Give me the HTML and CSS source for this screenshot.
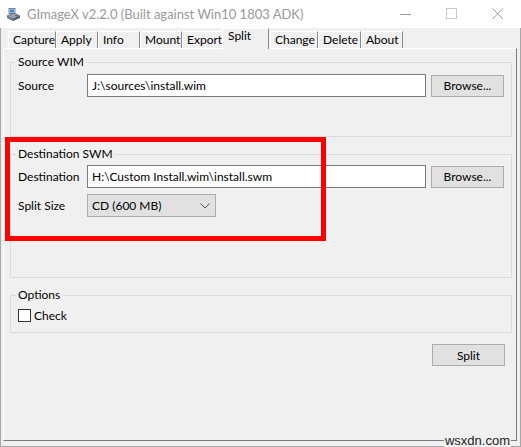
FILE: index.html
```html
<!DOCTYPE html>
<html>
<head>
<meta charset="utf-8">
<link rel="stylesheet" href="styles.css">
</head>
<body>
<div class="window">
  <div class="titlebar">
    <svg class="appicon" width="16" height="16" viewBox="0 0 16 16">
      <path d="M2 9 L9 6 L15 9 L8 12 Z" fill="#9aa4ae" stroke="#5a6470" stroke-width="0.8"/>
      <path d="M2 9 L2 11 L8 14 L8 12 Z" fill="#6b7580"/>
      <path d="M8 12 L8 14 L15 11 L15 9 Z" fill="#4f5964"/>
      <rect x="4" y="1.5" width="6" height="5" fill="#d8e4ee" stroke="#5a6a7a" stroke-width="0.8"/>
      <rect x="5" y="2.5" width="4" height="3" fill="#3a86c8"/>
      <path d="M10 8.5 L13 9.2" stroke="#2f6fb0" stroke-width="1.2"/>
    </svg>
    <div class="title">GImageX v2.2.0 (Built against Win10 1803 ADK)</div>
    <div class="controls">
      <div class="ctl"><svg width="12" height="12" viewBox="0 0 12 12"><path d="M0 6.5 H11" stroke="#9a9a9a" stroke-width="1"/></svg></div>
      <div class="ctl"><svg width="12" height="12" viewBox="0 0 12 12"><rect x="0.5" y="0.5" width="10" height="10" fill="none" stroke="#c8c8c8" stroke-width="1"/></svg></div>
      <div class="ctl"><svg width="12" height="12" viewBox="0 0 12 12"><path d="M0.5 0.5 L11 11 M11 0.5 L0.5 11" stroke="#9a9a9a" stroke-width="1"/></svg></div>
    </div>
  </div>
  <div class="tabs">
    <div class="tab w48">Capture</div>
    <div class="tab w42">Apply</div>
    <div class="tab w42">Info</div>
    <div class="tab w42">Mount</div>
    <div class="tab w41">Export</div>
    <div class="tab active w46">Split</div>
    <div class="tab w48">Change</div>
    <div class="tab w43">Delete</div>
    <div class="tab w42">About</div>
  </div>
  <div class="panel">
    <div class="group g-source">
      <div class="group-title">Source WIM</div>
      <div class="row">
        <div class="label">Source</div>
        <div class="input">J:\sources\install.wim</div>
        <div class="button">Browse...</div>
      </div>
    </div>
    <div class="group g-dest">
      <div class="group-title">Destination SWM</div>
      <div class="row">
        <div class="label">Destination</div>
        <div class="input">H:\Custom Install.wim\install.swm</div>
        <div class="button">Browse...</div>
      </div>
      <div class="row row2">
        <div class="label">Split Size</div>
        <div class="select">
          <span>CD (600 MB)</span>
          <svg width="10" height="6" viewBox="0 0 10 6"><path d="M0.5 0.5 L5 5 L9.5 0.5" fill="none" stroke="#555" stroke-width="1"/></svg>
        </div>
      </div>
    </div>
    <div class="group g-opts">
      <div class="group-title">Options</div>
      <div class="check-row">
        <div class="checkbox"></div>
        <span>Check</span>
      </div>
    </div>
    <div class="actions">
      <div class="button">Split</div>
    </div>
  </div>
  <div class="highlight"></div>
  <div class="watermark">wsxdn.com</div>
</div>
</body>
</html>
```
FILE: styles.css
```css
* { box-sizing: border-box; }
html, body { margin: 0; padding: 0; }
body {
  width: 521px;
  height: 447px;
  overflow: hidden;
  background: #f0f0f0;
  font-family: "Lato", "Noto Sans", sans-serif;
  font-size: 12px;
  color: #000;
}
.window {
  position: relative;
  width: 521px;
  height: 447px;
  background: #f0f0f0;
  border: 1px solid #a8a8a8;
  border-top: none;
}
.titlebar {
  height: 28px;
  background: #fff;
  display: flex;
  align-items: center;
  margin: 0 -1px;
}
.appicon { margin-left: 5px; margin-top: 2px; }
.title {
  margin-left: 6px;
  color: #999;
  font-size: 13px;
  white-space: nowrap;
}
.controls { margin-left: auto; display: flex; }
.ctl {
  width: 46px;
  height: 28px;
  display: flex;
  align-items: center;
  justify-content: center;
}
.tabs {
  height: 20px;
  display: flex;
  align-items: flex-end;
  padding-left: 7px;
  position: relative;
  z-index: 2;
}
.tab {
  height: 17px;
  line-height: 16px;
  padding-left: 4px;
  border-top: 1px solid #fff;
  border-left: 1px solid #fff;
  border-right: 1px solid #8a8a8a;
  background: #f0f0f0;
  white-space: nowrap;
}
.tab.active {
  height: 21px;
  margin: 0 1px -1px -1px;
  line-height: 14px;
  padding-left: 5px;
}
.w48 { width: 48px; }
.w46 { width: 47px; }
.w43 { width: 43px; }
.w42 { width: 42px; }
.w41 { width: 41px; }
.panel {
  margin-left: 2px;
  width: 514px;
  height: 393px;
  border-top: 1px solid #fff;
  border-left: 1px solid #fff;
  border-right: 1px solid #7a7a7a;
  border-bottom: 1px solid #7a7a7a;
  padding: 0 0 0 6px;
}
.group {
  width: 502px;
  border: 1px solid #dcdcdc;
}
.group-title {
  width: fit-content;
  margin: -9px 0 0 5px;
  padding: 0 2px;
  line-height: 16px;
  background: #f0f0f0;
  white-space: nowrap;
}
.g-source { margin-top: 13px; padding-bottom: 39px; }
.g-dest { margin-top: 17px; padding-bottom: 60px; }
.g-opts { margin-top: 17px; padding-bottom: 9px; }
.row {
  display: flex;
  align-items: center;
  padding-left: 7px;
  margin-top: 4px;
  height: 23px;
}
.g-dest .row { margin-top: 3px; }
.g-dest .row2 { margin-top: 6px; }
.label { width: 69px; white-space: nowrap; }
.input {
  width: 339px;
  height: 23px;
  background: #fff;
  border: 1px solid #7a7a7a;
  padding-left: 4px;
  line-height: 21px;
  white-space: nowrap;
}
.button {
  width: 73px;
  height: 22px;
  margin-left: 5px;
  background: #e1e1e1;
  border: 1px solid #adadad;
  display: flex;
  align-items: center;
  justify-content: center;
  white-space: nowrap;
}
.select {
  width: 129px;
  height: 23px;
  background: #e1e1e1;
  border: 1px solid #adadad;
  display: flex;
  align-items: center;
  justify-content: space-between;
  padding: 0 5px 0 4px;
}
.check-row {
  display: flex;
  align-items: center;
  height: 16px;
  margin-top: 4px;
  padding-left: 7px;
}
.checkbox {
  width: 13px;
  height: 13px;
  background: #fff;
  border: 1px solid #333;
  margin-right: 3px;
}
.actions {
  display: flex;
  justify-content: flex-end;
  width: 502px;
  margin-top: 11px;
  padding-right: 7px;
}
.actions .button { margin-left: 0; }
.highlight {
  position: absolute;
  left: 4px;
  top: 137px;
  width: 321px;
  height: 104px;
  border: 5px solid #ff0000;
  pointer-events: none;
}
.watermark {
  position: absolute;
  right: 9px;
  bottom: -1px;
  font-family: "Liberation Sans", Arial, sans-serif;
  font-size: 13px;
  line-height: 12px;
  color: #222;
  background: #f0f0f0;
  padding: 0 1px;
}
```
